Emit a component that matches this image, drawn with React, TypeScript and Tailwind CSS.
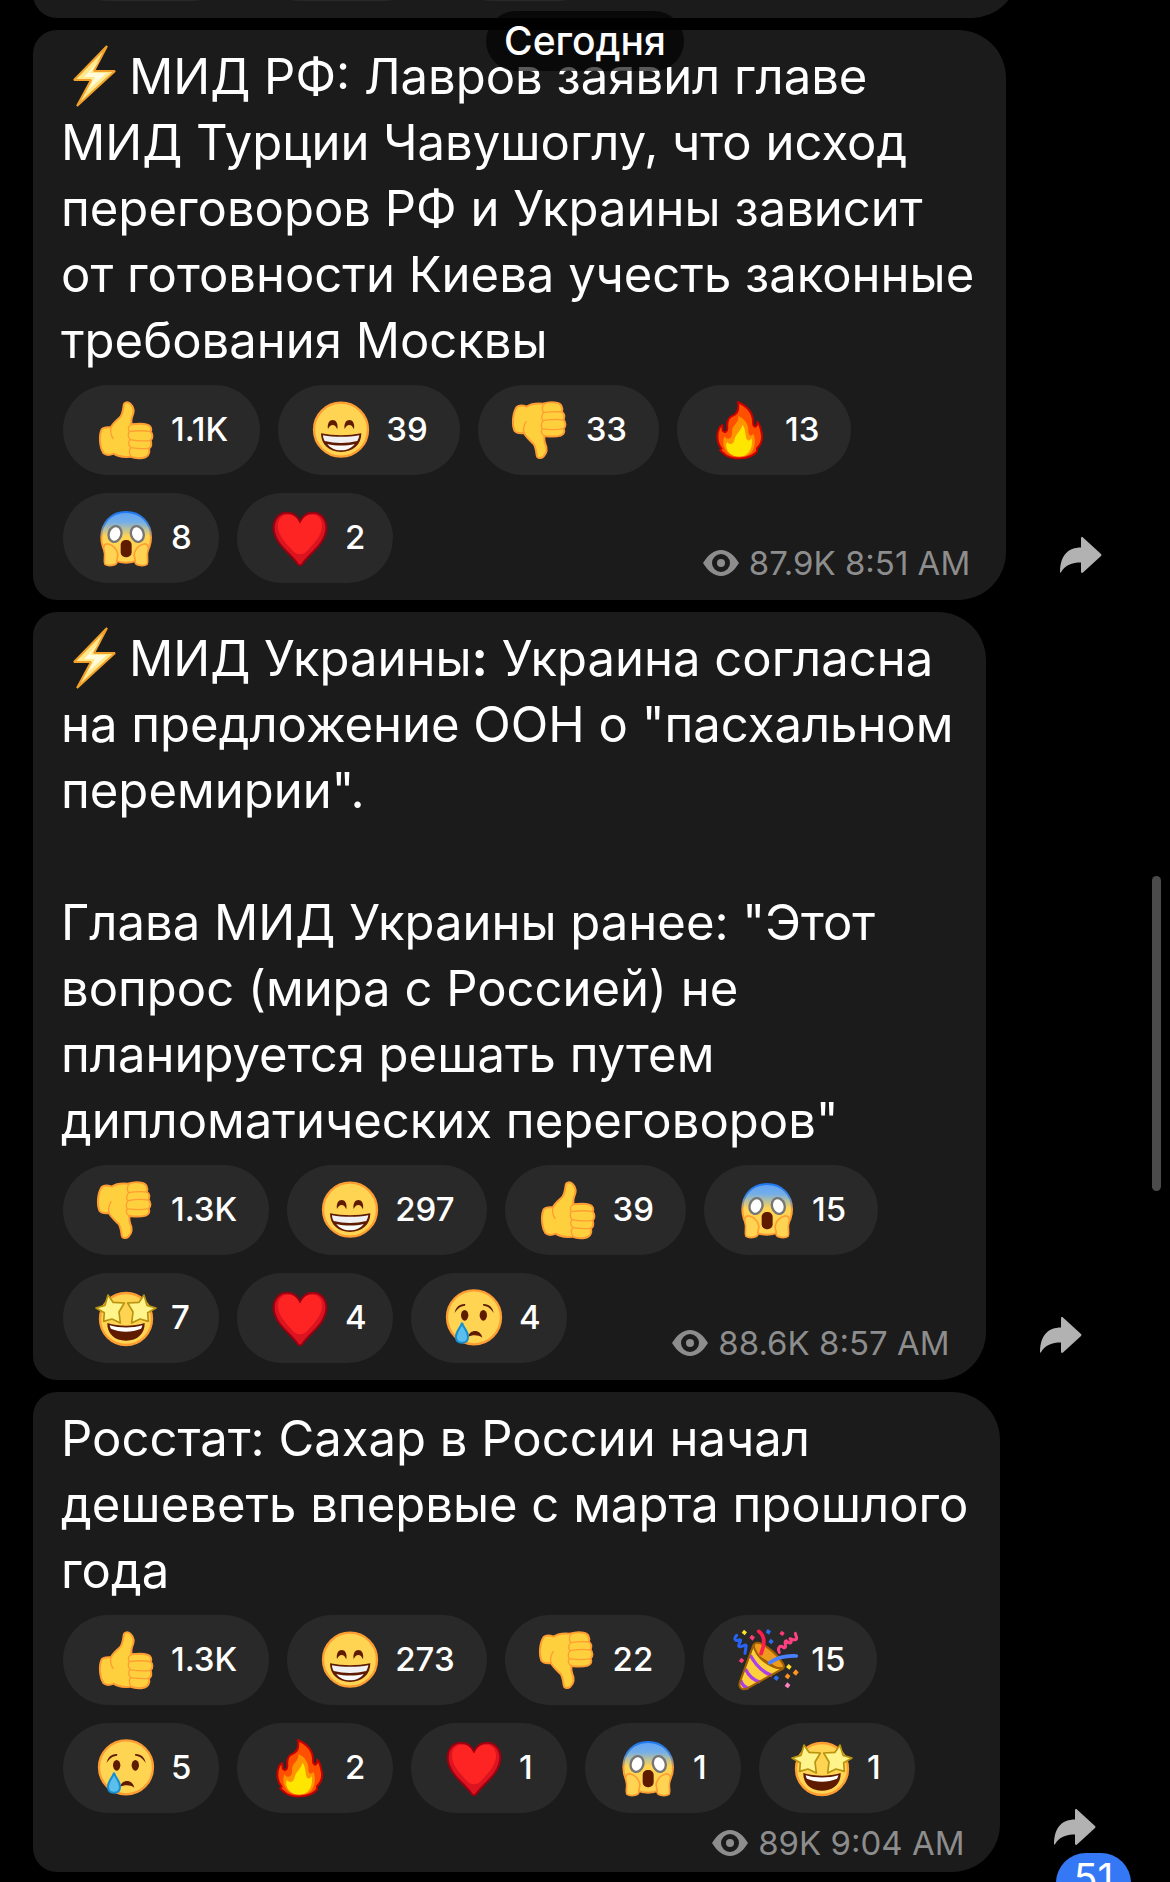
import type { ComponentType, ReactNode } from 'react';
import clsx from 'clsx';

function ThumbUp() {
  return (
    <g stroke="#ff9d33" strokeWidth="6" strokeLinejoin="round" strokeLinecap="round">
      <path
        fill="#ffd03e"
        d="M92 25C93 14 105 14 112 20C126 33 123 48 117 61C114 69 115 75 115 82C132 80 150 79 163 83C174 86 177 96 173 104C180 110 180 124 173 130C176 140 175 150 168 154C171 167 166 180 152 182C137 185 123 183 111 179C93 181 73 178 62 170C52 174 40 176 32 169C20 151 17 117 26 97C31 90 43 90 54 91C59 78 73 69 83 58C89 49 90 38 92 25Z"
      />
      <path
        fill="none"
        strokeWidth="4"
        d="M54 91C50 104 54 114 60 125M115 83C105 87 104 96 109 103C104 110 105 122 111 127C105 134 106 146 113 151C107 160 108 174 116 178M109 104C128 101 156 101 173 104M111 128C133 132 154 133 172 130M113 152C131 155 150 156 167 154"
      />
    </g>
  );
}

function ThumbDown() {
  return (
    <g transform="translate(-6 199) scale(1 -1)">
      <ThumbUp />
    </g>
  );
}

function Grin() {
  return (
    <>
      <circle cx="99" cy="98" r="81" fill="#ffd452" stroke="#ff9d33" strokeWidth="7" />
      <path
        fill="#5f1b00"
        d="M60 96C57 79 65 69 74 69C84 69 91 79 88 97C84 88 80 84 74 84C68 84 64 88 60 96ZM110 96C107 79 115 69 124 69C134 69 141 79 138 97C134 88 130 84 124 84C118 84 114 88 110 96Z"
      />
      <path fill="#5f1b00" d="M39 109C76 117 122 117 160 109C160 143 135 165 99 165C64 165 39 143 39 109Z" />
      <path fill="#f1f1f4" d="M45 115C79 121 120 121 154 115C153 122 150 128 148 132C116 140 82 140 50 132C47 127 45 121 45 115Z" />
      <path fill="#fafafa" d="M58 141C84 147 114 147 140 141C131 153 116 160 99 160C82 160 67 153 58 141Z" />
    </>
  );
}

function Fire() {
  return (
    <>
      <path
        fill="#ff5000"
        stroke="#c90000"
        strokeWidth="6"
        strokeLinejoin="round"
        d="M93 15C121 28 139 47 138 76C138 86 142 91 147 88C151 85 151 79 151 74C160 84 161 97 164 109C167 125 162 143 150 154L150 163C130 190 69 190 51 170L39 160L44 155C27 136 28 105 41 87L46 84L47 101C54 109 61 103 61 93C59 74 66 60 78 56C93 49 96 32 93 15Z"
      />
      <path
        fill="#ff9300"
        d="M94 57C112 65 126 82 124 105C125 116 132 119 139 110C148 130 143 153 134 166C116 184 79 184 61 166C49 151 45 132 53 118C62 133 76 124 75 106C74 82 96 82 94 57Z"
      />
      <path
        fill="#ffe600"
        d="M107 83C117 98 114 113 119 126C124 134 130 130 134 124C138 145 131 165 115 175C98 182 76 179 65 165C58 154 55 143 60 135C70 146 80 141 83 126C86 111 101 102 107 83Z"
      />
    </>
  );
}

function Scream() {
  return (
    <>
      <defs>
        <linearGradient id="scream-face" x1="0" y1="0" x2="0" y2="1">
          <stop offset="0" stopColor="#62a4f5" />
          <stop offset="0.2" stopColor="#74aee8" />
          <stop offset="0.48" stopColor="#ffd452" />
        </linearGradient>
        <linearGradient id="scream-edge" x1="0" y1="0" x2="0" y2="1">
          <stop offset="0" stopColor="#1f78f0" />
          <stop offset="0.24" stopColor="#3d86e0" />
          <stop offset="0.52" stopColor="#ff9d33" />
        </linearGradient>
      </defs>
      <path
        fill="url(#scream-face)"
        stroke="url(#scream-edge)"
        strokeWidth="6"
        d="M99 21C143 21 174 53 174 97C174 130 154 173 99 173C44 173 25 130 25 97C25 53 55 21 99 21Z"
      />
      <g fill="#fff" stroke="#767676" strokeWidth="7">
        <ellipse cx="66" cy="87" rx="19" ry="24" transform="rotate(18 66 87)" />
        <ellipse cx="133" cy="87" rx="19" ry="24" transform="rotate(-18 133 87)" />
      </g>
      <rect x="83" y="105" width="33" height="52" rx="15" fill="#5f1b00" />
      <g fill="#ffd452" stroke="#ff9d33" strokeWidth="5" strokeLinejoin="round">
        <path d="M36 178C30 168 39 153 33 137C29 124 35 115 46 117C59 120 69 131 73 142C79 154 68 161 72 171C70 183 45 184 36 178Z" />
        <path d="M162 178C168 168 159 153 165 137C169 124 163 115 152 117C139 120 129 131 125 142C119 154 130 161 126 171C128 183 153 184 162 178Z" />
      </g>
    </>
  );
}

function Heart() {
  return (
    <>
      <path
        fill="#dc1420"
        stroke="#990010"
        strokeWidth="6"
        strokeLinejoin="round"
        d="M99 51C91 30 77 23 60 23C35 23 19 44 20 71C23 119 73 147 92 177C96 182 103 182 106 177C125 147 175 119 178 71C179 44 163 23 138 23C121 23 107 30 99 51Z"
      />
      <path
        fill="#ff2424"
        d="M99 57C107 38 119 29 135 29C154 29 166 43 165 64C164 94 139 117 121 137C108 151 90 151 77 137C59 117 34 94 33 64C32 43 44 29 63 29C79 29 91 38 99 57Z"
      />
    </>
  );
}

function StarStruck() {
  return (
    <>
      <circle cx="99" cy="102" r="78" fill="#ffd452" stroke="#ff9d33" strokeWidth="7" />
      <path fill="#5f1b00" d="M43 114C77 125 121 125 155 114C156 146 133 167 99 167C65 167 42 146 43 114Z" />
      <path fill="#fff" d="M50 121C80 130 118 130 148 121C147 126 146 129 144 131C116 143 81 143 54 131C52 129 51 126 50 121Z" />
      <g fill="#fff38c" stroke="#b8930f" strokeWidth="5" strokeLinejoin="round">
        <path d="M45 30L60 52L94 54L78 81L82 114L57 102L32 109L34 83L9 69L36 61Z" />
        <path d="M153 30L138 52L104 54L120 81L116 114L141 102L166 109L164 83L189 69L162 61Z" />
      </g>
    </>
  );
}

function Cry() {
  return (
    <>
      <circle cx="99" cy="97" r="81" fill="#ffd452" stroke="#ff9d33" strokeWidth="7" />
      <g fill="#5f1b00">
        <ellipse cx="71" cy="91" rx="11" ry="16" />
        <ellipse cx="127" cy="91" rx="11" ry="16" />
        <path d="M41 84C43 68 55 56 73 57L72 62C58 63 49 71 41 84ZM158 84C156 68 144 56 126 57L127 62C141 63 150 71 158 84Z" />
        <path d="M80 157C84 144 92 138 102 138C113 138 121 145 124 158C110 149 94 149 80 157Z" />
      </g>
      <path fill="#5bbfee" stroke="#178fd0" strokeWidth="6" d="M63 113C67 129 81 138 81 155C81 167 73 173 63 173C53 173 45 167 45 155C45 138 59 129 63 113Z" />
    </>
  );
}

function Party() {
  return (
    <>
      <path fill="#ee9a1f" stroke="#a06000" strokeWidth="6" d="M63 52C77 35 130 75 151 112C157 125 146 128 132 124L60 78Z" />
      <path fill="#ffd03e" d="M61 62C78 94 110 125 148 128L43 184C25 193 16 181 20 167Z" />
      <path
        fill="none"
        stroke="#ac3fe8"
        strokeWidth="10"
        d="M52 85C67 113 89 136 117 146M37 126C47 146 62 160 81 165M23 160C27 173 35 182 46 184"
      />
      <path fill="none" stroke="#a06000" strokeWidth="6" strokeLinejoin="round" d="M61 54C70 92 110 125 151 124L43 184C27 192 16 181 20 167Z" />
      <g fill="none" strokeLinecap="round" strokeLinejoin="round" strokeWidth="11">
        <path stroke="#ff1d4e" d="M77 13C95 26 97 49 84 80" />
        <path stroke="#4a80ff" d="M110 107C130 93 155 85 190 87" />
        <path stroke="#2963f5" strokeWidth="9" d="M11 25C0 36 8 45 21 38C27 39 17 50 17 57C25 66 41 45 39 59L36 79" />
        <path stroke="#ff4081" strokeWidth="9" d="M139 76C132 62 142 52 152 62C165 65 150 42 160 41C171 54 180 47 171 35C177 38 192 42 191 33L187 19" />
      </g>
      <g strokeWidth="0">
        <path fill="#ffe02e" d="M33 8L42 16L35 25L26 17ZM167 111L176 119L169 128L159 120Z" />
        <path fill="#ff3a76" d="M56 23L66 31L59 41L49 32ZM146 11L155 18L149 27L139 20ZM25 92L34 100L27 109L17 102Z" />
        <path fill="#2e6bef" d="M104 6L114 13L108 23L98 16ZM113 35L122 43L115 52L106 45ZM129 145L138 152L131 162L121 154Z" />
        <path fill="#ff9420" d="M188 127L197 136L189 146L179 138ZM163 139L172 147L165 157L155 149Z" />
        <path fill="#ff80c5" d="M163 166L172 174L165 184L155 177Z" />
      </g>
    </>
  );
}

const emojis = {
  thumbUp: { label: 'Нравится', Art: ThumbUp },
  thumbDown: { label: 'Не нравится', Art: ThumbDown },
  grin: { label: 'Смешно', Art: Grin },
  fire: { label: 'Огонь', Art: Fire },
  scream: { label: 'Ужас', Art: Scream },
  heart: { label: 'Сердце', Art: Heart },
  starStruck: { label: 'Восторг', Art: StarStruck },
  cry: { label: 'Грустно', Art: Cry },
  party: { label: 'Праздник', Art: Party },
} satisfies Record<string, { label: string; Art: ComponentType }>;

type EmojiName = keyof typeof emojis;

function Bolt() {
  return (
    <svg viewBox="0 0 64 62" className="mr-1 inline h-[62px] w-[64px] align-[-13px]" aria-hidden="true">
      <path d="M46 1L33 26H54L16 61L30 35H13Z" fill="#ffe98a" stroke="#f2a02c" strokeWidth="2" strokeLinejoin="bevel" />
      <path d="M40 14L23 32H34L27 45L46 28H29Z" fill="#fffbdc" />
    </svg>
  );
}

function Reaction({ emoji, count }: { emoji: EmojiName; count: string }) {
  const { label, Art } = emojis[emoji];
  return (
    <button
      type="button"
      aria-label={`${label}: ${count}`}
      className={clsx(
        'flex h-[90px] min-w-[156px] items-center gap-3 rounded-full bg-[#292929] pl-[30px] text-[33px] font-medium text-white',
        count.length > 1 ? 'pr-8' : 'pr-6',
      )}
    >
      <svg viewBox="0 0 198 198" className="size-[66px] shrink-0" aria-hidden="true">
        <Art />
      </svg>
      {count}
    </button>
  );
}

function Meta({ views, time }: { views: string; time: string }) {
  return (
    <div className="ml-auto flex w-fit items-center gap-[10px] self-end pr-1 text-[33px] leading-10 text-[#8d8d8d]">
      <svg viewBox="0 0 36 26" className="h-[26px] w-9" fill="currentColor" aria-hidden="true">
        <path
          fillRule="evenodd"
          d="M0 13C5 5 11 0 18 0C25 0 31 5 36 13C31 21 25 26 18 26C11 26 5 21 0 13ZM18 4A9 9 0 1 0 18 22A9 9 0 1 0 18 4Z"
        />
        <circle cx="18" cy="13" r="4" />
      </svg>
      <span>
        {views} {time}
      </span>
    </div>
  );
}

interface Post {
  id: number;
  text: ReactNode;
  reactions: [EmojiName, string][];
  views: string;
  time: string;
  metaBelow?: boolean;
}

const posts: Post[] = [
  {
    id: 1,
    text: (
      <>
        <Bolt />МИД РФ: Лавров заявил главе
        <br />
        МИД Турции Чавушоглу, что исход
        <br />
        переговоров РФ и Украины зависит
        <br />
        от готовности Киева учесть законные
        <br />
        требования Москвы
      </>
    ),
    reactions: [
      ['thumbUp', '1.1K'],
      ['grin', '39'],
      ['thumbDown', '33'],
      ['fire', '13'],
      ['scream', '8'],
      ['heart', '2'],
    ],
    views: '87.9K',
    time: '8:51 AM',
  },
  {
    id: 2,
    text: (
      <>
        <Bolt />МИД Украины<b>:</b> Украина согласна
        <br />
        на предложение ООН о "пасхальном
        <br />
        перемирии".
        <br />
        <br />
        Глава МИД Украины ранее: "Этот
        <br />
        вопрос (мира с Россией) не
        <br />
        планируется решать путем
        <br />
        дипломатических переговоров"
      </>
    ),
    reactions: [
      ['thumbDown', '1.3K'],
      ['grin', '297'],
      ['thumbUp', '39'],
      ['scream', '15'],
      ['starStruck', '7'],
      ['heart', '4'],
      ['cry', '4'],
    ],
    views: '88.6K',
    time: '8:57 AM',
  },
  {
    id: 3,
    text: (
      <>
        Росстат: Сахар в России начал
        <br />
        дешеветь впервые с марта прошлого
        <br />
        года
      </>
    ),
    reactions: [
      ['thumbUp', '1.3K'],
      ['grin', '273'],
      ['thumbDown', '22'],
      ['party', '15'],
      ['cry', '5'],
      ['fire', '2'],
      ['heart', '1'],
      ['scream', '1'],
      ['starStruck', '1'],
    ],
    views: '89K',
    time: '9:04 AM',
    metaBelow: true,
  },
];

function Message({ post }: { post: Post }) {
  const meta = <Meta views={post.views} time={post.time} />;
  return (
    <article className="flex items-end gap-[54px]">
      <div className="w-fit rounded-l-[24px] rounded-r-[48px] bg-[#1b1b1b] pt-[14px] pr-8 pb-[9px] pl-7">
        <p className="text-[49px] leading-[66px] whitespace-nowrap">{post.text}</p>
        {/* zero base width, so the pills wrap at the width of the text */}
        <div className="mt-[11px] mb-2 flex w-0 min-w-full flex-wrap gap-[18px] pl-[2px]">
          {post.reactions.map(([emoji, count]) => (
            <Reaction key={emoji} emoji={emoji} count={count} />
          ))}
          {!post.metaBelow && meta}
        </div>
        {post.metaBelow && <div className="mt-[10px]">{meta}</div>}
      </div>
      <button type="button" aria-label="Переслать" className="mb-[27px] text-[#b2b2b2]">
        <svg viewBox="0 0 42 36" className="h-9 w-[42px]" fill="currentColor" aria-hidden="true">
          <path d="M21 1.2C21 0 22.2-.3 23 .5L41 17C41.6 17.6 41.6 18.4 41 19L23 35.5C22.2 36.2 21 36 21 34.8V25.5C12 25.5 5 28 1 35.2C.6 36 0 35.8 0 34.8C.5 18 8 10.8 21 10.6Z" />
        </svg>
      </button>
    </article>
  );
}

export default function App() {
  return (
    <div className="relative h-screen overflow-hidden bg-black font-['Inter','Noto_Sans',sans-serif] text-white">
      <main className="flex flex-col gap-3 pl-[33px]">
        {/* tail of the previous message, scrolled out at the top */}
        <div className="flex h-[18px] items-end overflow-hidden" aria-hidden="true">
          <div className="flex w-fit shrink-0 gap-[18px] rounded-l-[24px] rounded-r-[48px] bg-[#1b1b1b] pr-[416px] pb-[17px] pl-[30px]">
            <span className="h-[90px] w-[174px] rounded-full bg-[#292929]" />
            <span className="h-[90px] w-[174px] rounded-full bg-[#292929]" />
            <span className="h-[90px] w-[156px] rounded-full bg-[#292929]" />
          </div>
        </div>
        {posts.map((post) => (
          <Message key={post.id} post={post} />
        ))}
      </main>

      <div className="absolute top-[11px] left-1/2 -translate-x-1/2 rounded-full bg-black/65 px-[18px] text-[39px] leading-[60px] font-medium">
        Сегодня
      </div>

      <div className="absolute top-[876px] right-[9px] h-[315px] w-[9px] rounded-full bg-[#4b4b4b]" />

      <button
        type="button"
        aria-label="51 непрочитанное сообщение"
        className="absolute right-[39px] -bottom-[31px] flex h-[60px] w-[75px] justify-center rounded-full bg-[#3478f6] text-[39px] leading-[50px]"
      >
        51
      </button>
    </div>
  );
}
